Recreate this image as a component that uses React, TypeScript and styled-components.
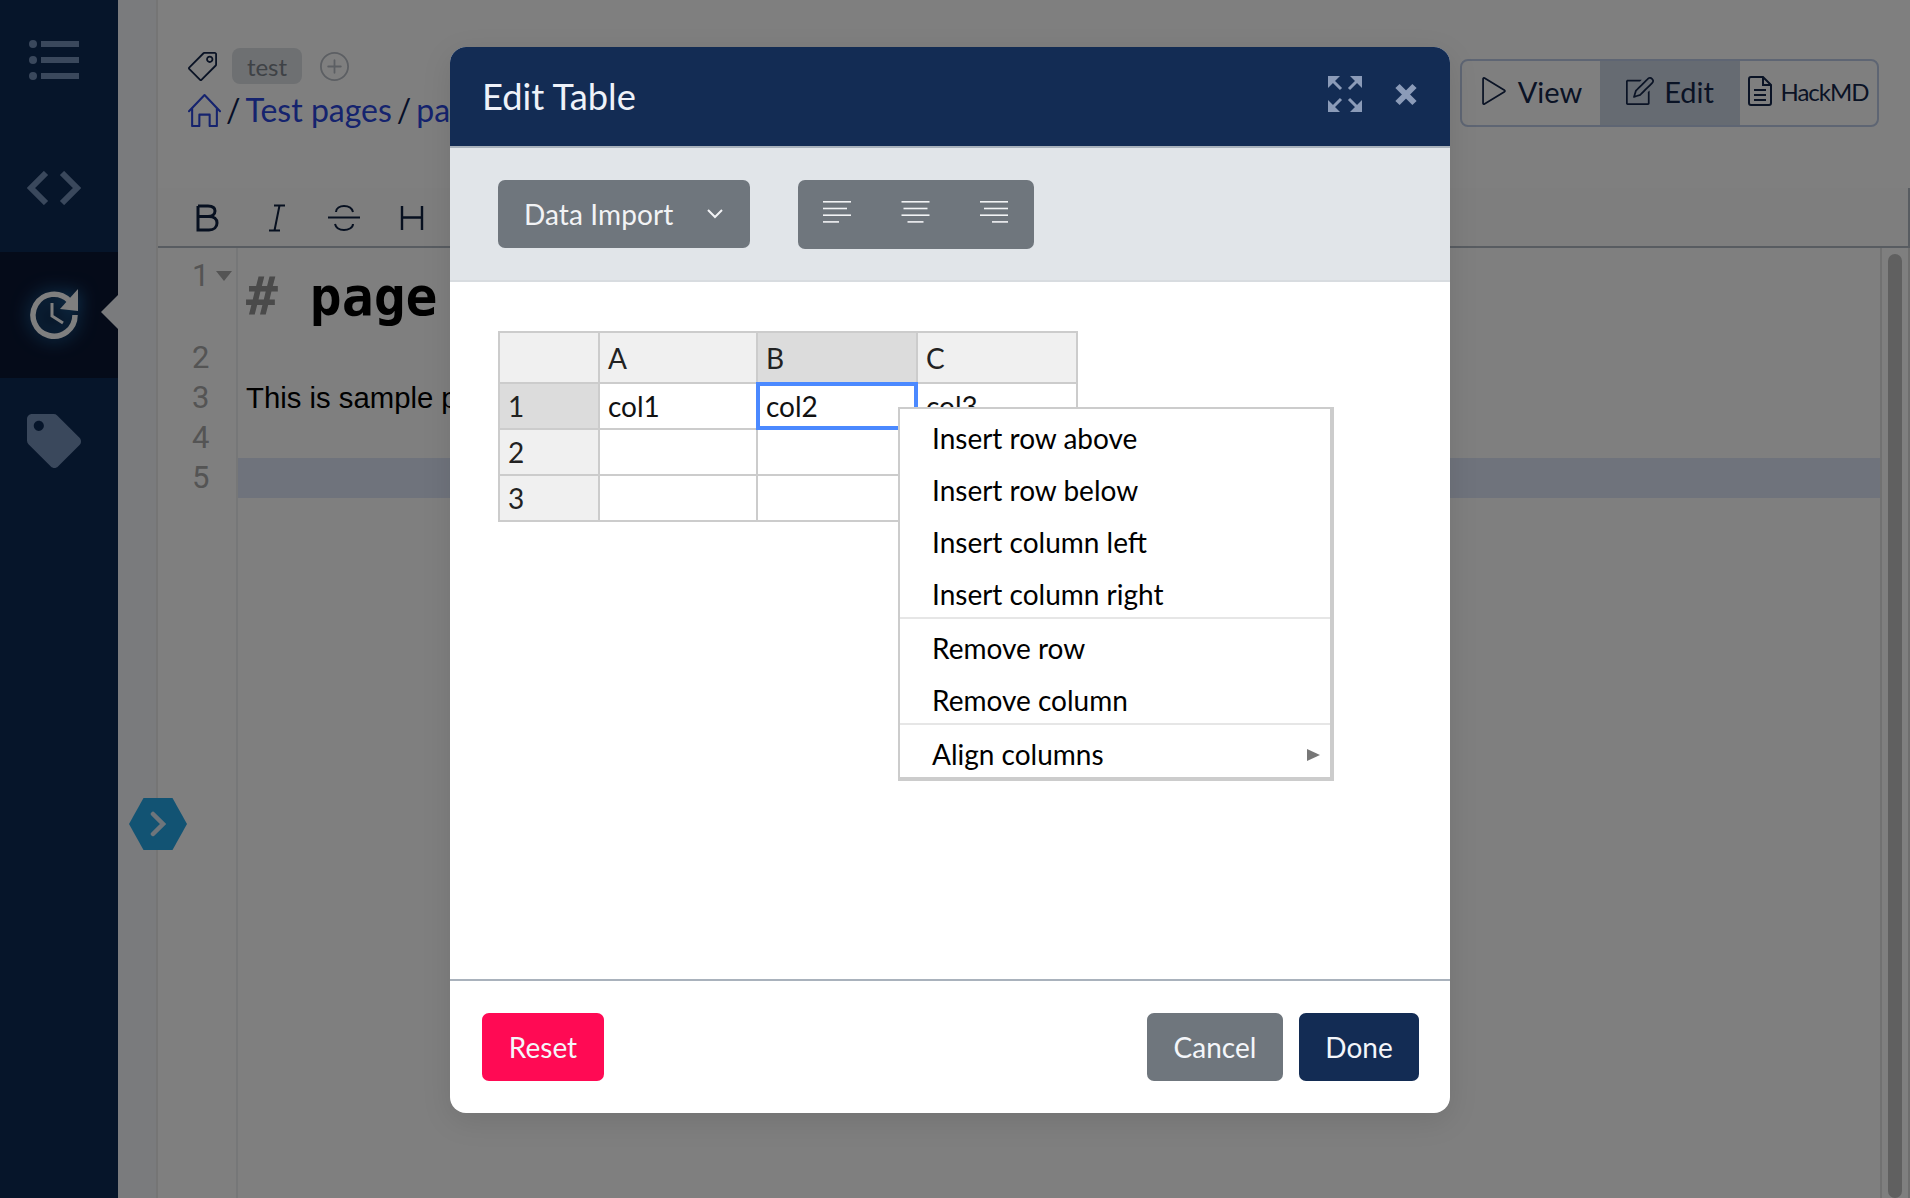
import { Fragment } from "react";
import { createGlobalStyle, styled } from "styled-components";
import { SlTag, SlHome, SlPlus, SlControlPlay, SlNote } from "react-icons/sl";
import { FaTag } from "react-icons/fa";

const GlobalStyle = createGlobalStyle`
  html, body {
    margin: 0;
    padding: 0;
    height: 1198px;
    overflow: hidden;
    background: #fff;
    font-family: "Lato", "Liberation Sans", sans-serif;
  }
  * { box-sizing: border-box; }
`;

const Page = styled.div`
  position: relative;
  display: flex;
  width: 1910px;
  height: 1198px;
  overflow: hidden;
`;

// 왼쪽 네비게이션
const Sidebar = styled.nav`
  width: 118px;
  flex: none;
  background: #0c2a54;
`;

const SideItem = styled.div<{ $active?: boolean; $lift?: number }>`
  position: relative;
  height: 126px;
  display: flex;
  align-items: center;
  justify-content: center;
  padding-right: 10px;
  padding-bottom: ${(p) => (p.$lift || 0) * 2}px;
  color: ${(p) => (p.$active ? "#ffffff" : "#7590b8")};
  background: ${(p) => (p.$active ? "#0a1632" : "transparent")};
`;

const SideCaret = styled.span`
  position: absolute;
  right: 0;
  top: 43px;
  border-style: solid;
  border-width: 17px 17px 17px 0;
  border-color: transparent #f4f6fa transparent transparent;
`;

const Gutter = styled.div`
  width: 40px;
  flex: none;
  background: #f4f6fa;
  border-right: 2px solid #ebebeb;
`;

const Main = styled.main`
  flex: 1;
  min-width: 0;
  display: flex;
  flex-direction: column;
  background: #fff;
`;

const Head = styled.header`
  height: 188px;
  flex: none;
  padding: 48px 30px 0 30px;
  display: flex;
  justify-content: space-between;
`;

const TagRow = styled.div`
  display: flex;
  align-items: center;
  height: 36px;
  color: #14264a;
`;

const TagPill = styled.span`
  margin-left: 15px;
  width: 70px;
  height: 36px;
  border-radius: 8px;
  background: #dde0e5;
  color: #7d848c;
  font-size: 24px;
  display: flex;
  align-items: center;
  justify-content: center;
`;

const AddTag = styled.span`
  margin-left: 18px;
  display: flex;
  color: #b9bec6;
`;

const Crumbs = styled.div`
  margin-top: 6px;
  display: flex;
  align-items: center;
  font-size: 32px;
  line-height: 40px;
  color: #0e1e50;
  white-space: nowrap;
`;

const CrumbLink = styled.span`
  color: #2a46dc;
  display: flex;
`;

const CrumbSep = styled.span<{ $before: number; $after: number }>`
  margin: 0 ${(p) => p.$after}px 0 ${(p) => p.$before}px;
`;

const ViewSwitch = styled.div`
  margin-top: 11px;
  margin-right: 1px;
  width: 419px;
  height: 68px;
  display: flex;
  border: 2px solid #bccbe6;
  border-radius: 8px;
  color: #14264a;
`;

const SwitchItem = styled.div<{ $width: number; $active?: boolean; $small?: boolean }>`
  width: ${(p) => p.$width}px;
  display: flex;
  align-items: center;
  justify-content: center;
  gap: ${(p) => (p.$small ? 8 : 10)}px;
  padding-bottom: 4px;
  font-size: ${(p) => (p.$small ? 24 : 29)}px;
  letter-spacing: ${(p) => (p.$small ? "-1px" : "0")};
  background: ${(p) => (p.$active ? "#cdd6e4" : "transparent")};
`;

const Toolbar = styled.div`
  height: 60px;
  flex: none;
  display: flex;
  align-items: center;
  padding: 2px 0 0 38px;
  border-bottom: 2px solid #b0b8c2;
  border-right: 2px solid #b0b8c2;
  background: #fcfcfc;
  color: #0e2040;
`;

const ToolIcon = styled.span<{ $width: number }>`
  width: ${(p) => p.$width}px;
  display: flex;
`;

const Editor = styled.div`
  flex: 1;
  display: flex;
  min-height: 0;
`;

const LineNumbers = styled.div`
  width: 80px;
  flex: none;
  border-right: 2px solid #eceef0;
  padding-top: 8px;
  color: #a8a8a8;
  font-family: "Roboto", "Liberation Sans", sans-serif;
  font-size: 31px;
`;

const LineNo = styled.div<{ $height: number }>`
  position: relative;
  height: ${(p) => p.$height}px;
  line-height: 40px;
  padding-left: 34px;
`;

const FoldCaret = styled.span`
  position: absolute;
  left: 58px;
  top: 15px;
  border-style: solid;
  border-width: 10px 8px 0 8px;
  border-color: #a8a8a8 transparent transparent transparent;
`;

const Code = styled.div`
  flex: 1;
  padding-top: 8px;
  position: relative;
`;

const H1Line = styled.div`
  height: 82px;
  padding: 10px 0 0 8px;
  font-family: "DejaVu Sans Mono", monospace;
  font-weight: 700;
  font-size: 53px;
  line-height: 62px;
  color: #000;
  white-space: pre;
`;

const HeadHash = styled.span`
  color: #949494;
`;

const CodeLine = styled.div<{ $current?: boolean }>`
  height: 40px;
  padding-left: 8px;
  line-height: 40px;
  font-family: "Liberation Sans", sans-serif;
  font-size: 29.3px;
  color: #000;
  background: ${(p) => (p.$current ? "#dee6f8" : "transparent")};
`;

const ScrollTrack = styled.div`
  position: absolute;
  right: 0;
  top: 0;
  bottom: 0;
  width: 30px;
  padding: 6px 6px 0 6px;
  background: #fff;
  border-left: 2px solid #e2e2e2;
  border-right: 2px solid #dcdcdc;
`;

const ScrollThumb = styled.div`
  height: 100%;
  border-radius: 8px;
  background: #c0c0c0;
`;

const ToggleHex = styled.button`
  position: absolute;
  left: 129px;
  top: 798px;
  width: 58px;
  height: 52px;
  padding: 0;
  border: 0;
  display: flex;
  align-items: center;
  justify-content: center;
  background: #24a6e6;
  clip-path: polygon(25% 0, 75% 0, 100% 50%, 75% 100%, 25% 100%, 0 50%);
  color: #dcebf6;
`;

const Backdrop = styled.div`
  position: absolute;
  inset: 0;
  background: rgba(0, 0, 0, 0.5);
  padding: 47px 10px 0 0;
  display: flex;
  justify-content: center;
  align-items: flex-start;
`;

const Modal = styled.section`
  width: 1000px;
  height: 1066px;
  display: flex;
  flex-direction: column;
  background: #fff;
  border-radius: 16px;
  overflow: hidden;
  box-shadow: 0 8px 30px rgba(0, 0, 0, 0.1);
`;

const ModalHeader = styled.div`
  height: 101px;
  flex: none;
  display: flex;
  align-items: center;
  padding: 0 33px 2px 32px;
  background: #132c54;
  border-bottom: 2px solid #a9b2bc;
  color: #eef2f9;
`;

const ModalTitle = styled.h5`
  flex: 1;
  margin: 0;
  font-size: 36.300px;
  font-weight: 400;
`;

const HeaderActions = styled.div`
  display: flex;
  align-items: center;
  gap: 33px;
  margin-bottom: 3px;
  color: #8b9bb8;
`;

const SubBar = styled.div`
  height: 134px;
  flex: none;
  display: flex;
  align-items: center;
  gap: 48px;
  padding: 0 48px;
  background: #e1e5e9;
  border-bottom: 2px solid #d8dce0;
`;

const DropdownButton = styled.button`
  width: 252px;
  height: 68px;
  border: 0;
  border-radius: 7px;
  background: #6f767d;
  color: #f2f3f5;
  font: 400 28px "Lato", sans-serif;
  letter-spacing: 0.1px;
  display: flex;
  align-items: center;
  justify-content: space-between;
  padding: 0 26px;
`;

const AlignGroup = styled.div`
  width: 236px;
  height: 69px;
  border-radius: 7px;
  background: #6f767d;
  color: #f2f3f5;
  display: flex;
  align-items: center;
  justify-content: space-between;
  padding: 0 26px 5px 25px;
`;

const ModalBody = styled.div`
  flex: 1;
  padding: 49px 48px 0;
`;

const TableWrap = styled.div`
  position: relative;
  width: 580px;
`;

const Sheet = styled.table`
  border-collapse: collapse;
  table-layout: fixed;
  width: 580px;
  font-size: 28px;
  color: #111;

  td, th {
    border: 2px solid #ccc;
    padding: 0 0 0 8px;
    font-weight: 400;
    text-align: left;
  }
`;

const SheetRow = styled.tr<{ $height: number }>`
  height: ${(p) => p.$height}px;
`;

const HeadCell = styled.th<{ $active?: boolean }>`
  background: ${(p) => (p.$active ? "#dcdcdc" : "#f0f0f0")};
  color: #222;
`;

const DataCell = styled.td<{ $selected?: boolean }>`
  outline: ${(p) => (p.$selected ? "4px solid #4b89ff" : "none")};
  outline-offset: -3px;
`;

const ContextMenu = styled.ul`
  position: absolute;
  left: 400px;
  top: 76px;
  width: 436px;
  margin: 0;
  padding: 0;
  list-style: none;
  background: #fff;
  border: solid #ccc;
  border-width: 2px 4px 4px 2px;
`;

const MenuItem = styled.li`
  position: relative;
  height: 52px;
  padding: 10px 0 0 32px;
  font-size: 28px;
  line-height: 38px;
  color: #000;
`;

const MenuDivider = styled.li`
  height: 2px;
  background: #e6e6e6;
`;

const SubArrow = styled.span`
  position: absolute;
  right: 10px;
  top: 24px;
  border-style: solid;
  border-width: 6px 0 6px 13px;
  border-color: transparent transparent transparent #777;
`;

const ModalFooter = styled.div`
  height: 134px;
  flex: none;
  display: flex;
  align-items: flex-start;
  gap: 16px;
  padding: 32px 31px 0 32px;
  border-top: 2px solid #a9b2bc;
`;

const FooterButton = styled.button<{ $bg: string; $width: number }>`
  width: ${(p) => p.$width}px;
  height: 68px;
  border: 0;
  border-radius: 7px;
  background: ${(p) => p.$bg};
  color: #f4f6fa;
  font: 400 28px "Lato", sans-serif;
`;

const Spacer = styled.div`
  flex: 1;
`;

function ListIcon() {
  return (
    <svg width="50" height="42" viewBox="0 0 50 42" fill="currentColor">
      <circle cx="4" cy="5" r="4" />
      <circle cx="4" cy="21" r="4" />
      <circle cx="4" cy="37" r="4" />
      <rect x="12" y="2" width="38" height="6" />
      <rect x="12" y="18" width="38" height="6" />
      <rect x="12" y="34" width="38" height="6" />
    </svg>
  );
}

function CodeIcon() {
  return (
    <svg width="54" height="34" viewBox="0 0 54 34" fill="none" stroke="currentColor" strokeWidth="6">
      <path d="M19 2 4 17l15 15M35 2l15 15-15 15" />
    </svg>
  );
}

function HistoryIcon() {
  return (
    <svg width="52" height="54" viewBox="0 0 52 54" fill="none" style={{ filter: "drop-shadow(0 0 9px #2a8fd8)" }}>
      <path d="M47 28A21 21 0 1 1 41 13.500" stroke="currentColor" strokeWidth="5.500" />
      <path d="M50 2v22l-18-2z" fill="currentColor" />
      <path d="M24 16v13l11 7" stroke="currentColor" strokeWidth="3" />
    </svg>
  );
}

function BoldIcon() {
  return <svg width="24" height="28" viewBox="0 0 24 28" fill="none" stroke="currentColor" strokeWidth="3"><path d="M2 2v24h11c5 0 8-3 8-7s-3-6.500-8-6.500H2M2 12.500h10c4 0 7-2.200 7-5.500s-3-5-7-5H2" /></svg>;
}

function ItalicIcon() {
  return <svg width="18" height="28" viewBox="0 0 18 28" fill="none" stroke="currentColor" strokeWidth="2"><path d="M6 1.500h11M1 26.500h11M11.500 1.500l-5 25" /></svg>;
}

function StrikeIcon() {
  return <svg width="32" height="28" viewBox="0 0 32 28" fill="none" stroke="currentColor" strokeWidth="2"><path d="M0 13.500h32M25 8c-1-4-5-6-9-6s-8 2-8 6M7 20c1 4 5 6 9 6s9-2 9-6" /></svg>;
}

function HeadingIcon() {
  return <svg width="24" height="28" viewBox="0 0 24 28" fill="none" stroke="currentColor" strokeWidth="2.400"><path d="M2 2v24M22 2v24M2 13.500h20" /></svg>;
}

function ChevronDown() {
  return <svg width="18" height="10" viewBox="0 0 18 10" fill="none" stroke="currentColor" strokeWidth="2"><path d="m2 1 7 7 7-7" /></svg>;
}

function AlignIcon({ align }: { align: "left" | "center" | "right" }) {
  const widths = [28, 24, 28, 16];
  return (
    <svg width="29" height="22" viewBox="0 0 29 22" fill="currentColor">
      {widths.map((w, i) => {
        const x = align === "left" ? 0 : align === "right" ? 29 - w : (29 - w) / 2;
        return <rect key={i} x={x} y={i * 6.7} width={w} height="1.600" />;
      })}
    </svg>
  );
}

function ExpandIcon() {
  return (
    <svg width="34" height="36" viewBox="0 0 34 36" fill="currentColor">
      <path d="M0 0h12L0 12z" />
      <path d="M34 0H22l12 12z" />
      <path d="M0 36h12L0 24z" />
      <path d="M34 36H22l12-12z" />
      <path d="M4 4l9 9M30 4l-9 9M4 32l9-9M30 32l-9-9" fill="none" stroke="currentColor" strokeWidth="3" />
    </svg>
  );
}

function CloseIcon() {
  return (
    <svg width="22" height="23" viewBox="0 0 22 23" fill="none" stroke="currentColor" strokeWidth="6">
      <path d="m2.500 3 17 17M19.500 3l-17 17" />
    </svg>
  );
}

function DocIcon() {
  return (
    <svg width="24" height="30" viewBox="0 0 24 30" fill="none" stroke="currentColor" strokeWidth="2">
      <path d="M15 1H3a2 2 0 0 0-2 2v24a2 2 0 0 0 2 2h18a2 2 0 0 0 2-2V9zM15 1v8h8M6 14h12M6 19h12M6 24h12" />
    </svg>
  );
}

const menuGroups = [
  ["Insert row above", "Insert row below", "Insert column left", "Insert column right"],
  ["Remove row", "Remove column"],
];

export default function App() {
  return (
    <Page>
      <GlobalStyle />
      <Sidebar>
        <SideItem $lift={3}><ListIcon /></SideItem>
        <SideItem $lift={1}><CodeIcon /></SideItem>
        <SideItem $active $lift={1}>
          <HistoryIcon />
          <SideCaret />
        </SideItem>
        <SideItem><FaTag size={54} /></SideItem>
      </Sidebar>
      <Gutter />
      <Main>
        <Head>
          <div>
            <TagRow>
              <SlTag size={29} />
              <TagPill>test</TagPill>
              <AddTag><SlPlus size={29} /></AddTag>
            </TagRow>
            <Crumbs>
              <CrumbLink><SlHome size={33} /></CrumbLink>
              <CrumbSep $before={5} $after={5}>/</CrumbSep>
              <CrumbLink>Test pages</CrumbLink>
              <CrumbSep $before={5} $after={5}>/</CrumbSep>
              <CrumbLink>page</CrumbLink>
            </Crumbs>
          </div>
          <ViewSwitch>
            <SwitchItem $width={138}><SlControlPlay size={28} />View</SwitchItem>
            <SwitchItem $width={140} $active><SlNote size={28} />Edit</SwitchItem>
            <SwitchItem $width={137} $small><DocIcon />HackMD</SwitchItem>
          </ViewSwitch>
        </Head>
        <Toolbar>
          <ToolIcon $width={72}><BoldIcon /></ToolIcon>
          <ToolIcon $width={60}><ItalicIcon /></ToolIcon>
          <ToolIcon $width={72}><StrikeIcon /></ToolIcon>
          <ToolIcon $width={60}><HeadingIcon /></ToolIcon>
        </Toolbar>
        <Editor>
          <LineNumbers>
            <LineNo $height={82}>1<FoldCaret /></LineNo>
            <LineNo $height={40}>2</LineNo>
            <LineNo $height={40}>3</LineNo>
            <LineNo $height={40}>4</LineNo>
            <LineNo $height={40}>5</LineNo>
          </LineNumbers>
          <Code>
            <H1Line><HeadHash>#</HeadHash>{" page"}</H1Line>
            <CodeLine>&nbsp;</CodeLine>
            <CodeLine>This is sample page</CodeLine>
            <CodeLine>&nbsp;</CodeLine>
            <CodeLine $current>&nbsp;</CodeLine>
            <ScrollTrack><ScrollThumb /></ScrollTrack>
          </Code>
        </Editor>
      </Main>
      <ToggleHex>
        <svg width="16" height="26" viewBox="0 0 16 26" fill="none" stroke="currentColor" strokeWidth="4.500" strokeLinecap="round">
          <path d="m3 3 10 10L3 23" />
        </svg>
      </ToggleHex>
      <Backdrop>
        <Modal>
          <ModalHeader>
            <ModalTitle>Edit Table</ModalTitle>
            <HeaderActions>
              <ExpandIcon />
              <CloseIcon />
            </HeaderActions>
          </ModalHeader>
          <SubBar>
            <DropdownButton>Data Import <ChevronDown /></DropdownButton>
            <AlignGroup>
              <AlignIcon align="left" />
              <AlignIcon align="center" />
              <AlignIcon align="right" />
            </AlignGroup>
          </SubBar>
          <ModalBody>
            <TableWrap>
              <Sheet>
                <colgroup>
                  <col width="100" />
                  <col width="158" />
                  <col width="160" />
                  <col width="160" />
                </colgroup>
                <tbody>
                  <SheetRow $height={51}>
                    <HeadCell />
                    <HeadCell>A</HeadCell>
                    <HeadCell $active>B</HeadCell>
                    <HeadCell>C</HeadCell>
                  </SheetRow>
                  <SheetRow $height={46}>
                    <HeadCell $active>1</HeadCell>
                    <DataCell>col1</DataCell>
                    <DataCell $selected>col2</DataCell>
                    <DataCell>col3</DataCell>
                  </SheetRow>
                  <SheetRow $height={46}>
                    <HeadCell>2</HeadCell>
                    <DataCell />
                    <DataCell />
                    <DataCell />
                  </SheetRow>
                  <SheetRow $height={46}>
                    <HeadCell>3</HeadCell>
                    <DataCell />
                    <DataCell />
                    <DataCell />
                  </SheetRow>
                </tbody>
              </Sheet>
              <ContextMenu>
                {menuGroups.map((group) => (
                  <Fragment key={group[0]}>
                    {group.map((label) => (
                      <MenuItem key={label}>{label}</MenuItem>
                    ))}
                    <MenuDivider />
                  </Fragment>
                ))}
                <MenuItem>
                  Align columns
                  <SubArrow />
                </MenuItem>
              </ContextMenu>
            </TableWrap>
          </ModalBody>
          <ModalFooter>
            <FooterButton $bg="#ff0a54" $width={122}>Reset</FooterButton>
            <Spacer />
            <FooterButton $bg="#6f767d" $width={136}>Cancel</FooterButton>
            <FooterButton $bg="#132c54" $width={120}>Done</FooterButton>
          </ModalFooter>
        </Modal>
      </Backdrop>
    </Page>
  );
}
